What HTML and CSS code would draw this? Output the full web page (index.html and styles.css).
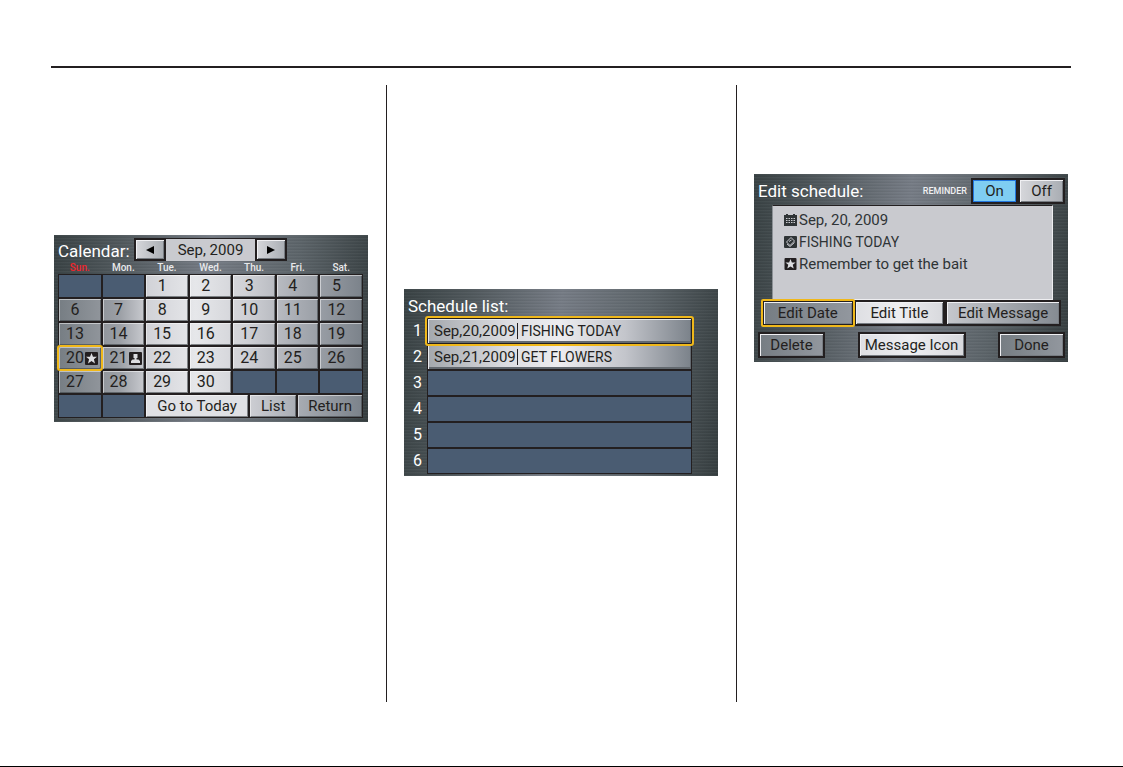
FILE: index.html
```
<!DOCTYPE html>
<html lang="en">
<head>
  <meta charset="UTF-8">
  <meta name="viewport" content="width=device-width, initial-scale=1.0">
  <title>Calendar</title>
  <link rel="stylesheet" href="styles.css">
</head>
<body>
  <!-- Shared icons -->
  <svg class="sprite" aria-hidden="true">
    <symbol id="icon-star" viewBox="0 0 13 13">
      <rect width="13" height="13" rx="1" fill="#231f20"/>
      <path d="M6.500 1 8 4.800h4L8.900 7.300 10 11.500 6.500 9.100 3 11.500l1.100-4.200L1 4.800h4z" fill="#dcdde0"/>
    </symbol>
    <symbol id="icon-person" viewBox="0 0 13 13">
      <rect width="13" height="13" rx="1" fill="#231f20"/>
      <path d="M4.500 2h4v4h-1v1.500h2L11 9v2H2V9l1.500-1.500h2V6h-1z" fill="#dcdde0"/>
    </symbol>
    <symbol id="icon-date" viewBox="0 0 13 12">
      <path d="M0 1h2V0h2v1h5V0h2v1h2v11H0z" fill="#2f3436"/>
      <path d="M2 4.500h9M2 6.500h9M2 8.500h9" stroke="#c9cacf" stroke-dasharray="1.500 1"/>
    </symbol>
    <symbol id="icon-title" viewBox="0 0 13 12">
      <rect width="13" height="12" rx="1" fill="#2f3436"/>
      <path d="M2.500 6 7 1.500 10.500 5 6 9.500zM3 8l3 2.500L10.500 6.500M5 5.500 7.500 4" fill="none" stroke="#c9cacf"/>
    </symbol>
  </svg>

  <hr class="page-rule">

  <main class="columns">
    <section class="column column-calendar">
      <div class="screen calendar">
        <header class="calendar-header">
          <h2>Calendar:</h2>
          <button class="key nav-key" aria-label="Previous month"><svg viewBox="0 0 10 8"><path d="M9 0v8L1 4z"/></svg></button>
          <div class="month">Sep, 2009</div>
          <button class="key nav-key" aria-label="Next month"><svg viewBox="0 0 10 8"><path d="M1 0v8l8-4z"/></svg></button>
        </header>
        <table class="month-table">
          <thead>
            <tr><th class="sunday">Sun.</th><th>Mon.</th><th>Tue.</th><th>Wed.</th><th>Thu.</th><th>Fri.</th><th>Sat.</th></tr>
          </thead>
          <tbody>
            <tr>
              <td class="empty"></td>
              <td class="empty"></td>
              <td><button class="day"><span>1</span></button></td>
              <td><button class="day"><span>2</span></button></td>
              <td><button class="day"><span>3</span></button></td>
              <td><button class="day"><span>4</span></button></td>
              <td><button class="day"><span>5</span></button></td>
            </tr>
            <tr>
              <td><button class="day"><span>6</span></button></td>
              <td><button class="day"><span>7</span></button></td>
              <td><button class="day"><span>8</span></button></td>
              <td><button class="day"><span>9</span></button></td>
              <td><button class="day"><span>10</span></button></td>
              <td><button class="day"><span>11</span></button></td>
              <td><button class="day"><span>12</span></button></td>
            </tr>
            <tr>
              <td><button class="day"><span>13</span></button></td>
              <td><button class="day"><span>14</span></button></td>
              <td><button class="day"><span>15</span></button></td>
              <td><button class="day"><span>16</span></button></td>
              <td><button class="day"><span>17</span></button></td>
              <td><button class="day"><span>18</span></button></td>
              <td><button class="day"><span>19</span></button></td>
            </tr>
            <tr>
              <td><button class="day selected"><span>20</span><svg><use href="#icon-star"/></svg></button></td>
              <td><button class="day"><span>21</span><svg><use href="#icon-person"/></svg></button></td>
              <td><button class="day"><span>22</span></button></td>
              <td><button class="day"><span>23</span></button></td>
              <td><button class="day"><span>24</span></button></td>
              <td><button class="day"><span>25</span></button></td>
              <td><button class="day"><span>26</span></button></td>
            </tr>
            <tr>
              <td><button class="day"><span>27</span></button></td>
              <td><button class="day"><span>28</span></button></td>
              <td><button class="day"><span>29</span></button></td>
              <td><button class="day"><span>30</span></button></td>
              <td class="empty"></td>
              <td class="empty"></td>
              <td class="empty"></td>
            </tr>
            <tr>
              <td class="empty"></td>
              <td class="empty"></td>
              <td colspan="5">
                <div class="calendar-actions">
                  <button class="today">Go to Today</button>
                  <button class="list">List</button>
                  <button class="return">Return</button>
                </div>
              </td>
            </tr>
          </tbody>
        </table>
      </div>
    </section>

    <section class="column column-list">
      <div class="screen schedule">
        <h2>Schedule list:</h2>
        <ol class="schedule-list">
          <li><span class="number">1</span><button class="entry selected"><span class="date">Sep,20,2009</span><span class="title">FISHING TODAY</span></button></li>
          <li><span class="number">2</span><button class="entry"><span class="date">Sep,21,2009</span><span class="title">GET FLOWERS</span></button></li>
          <li><span class="number">3</span><div class="entry empty"></div></li>
          <li><span class="number">4</span><div class="entry empty"></div></li>
          <li><span class="number">5</span><div class="entry empty"></div></li>
          <li><span class="number">6</span><div class="entry empty"></div></li>
        </ol>
      </div>
    </section>

    <section class="column column-edit">
      <div class="screen edit">
        <header class="edit-header">
          <h2>Edit schedule:</h2>
          <span class="reminder">REMINDER</span>
          <div class="toggle">
            <button class="key on">On</button>
            <button class="key">Off</button>
          </div>
        </header>
        <div class="details">
          <p><svg><use href="#icon-date"/></svg>Sep, 20, 2009</p>
          <p><svg><use href="#icon-title"/></svg><span class="title">FISHING TODAY</span></p>
          <p><svg><use href="#icon-star"/></svg>Remember to get the bait</p>
        </div>
        <div class="edit-actions">
          <button class="key dark selected">Edit Date</button>
          <button class="key light">Edit Title</button>
          <button class="key fade">Edit Message</button>
        </div>
        <div class="edit-footer">
          <button class="key dark">Delete</button>
          <button class="key light">Message Icon</button>
          <button class="key dark">Done</button>
        </div>
      </div>
    </section>
  </main>
</body>
</html>
```
FILE: styles.css
```
* {
  box-sizing: border-box;
  margin: 0;
  padding: 0;
}

body {
  display: flex;
  flex-direction: column;
  min-height: 100vh;
  padding: 66px 52px 64px 51px;
  border-bottom: 1px solid #000;
  background-color: #fff;
  color: #231f20;
  font-family: Roboto, "Liberation Sans", sans-serif;
  font-size: 15px;
}

.sprite {
  position: absolute;
  width: 0;
  height: 0;
}

.page-rule {
  height: 2px;
  border: none;
  background-color: #231f20;
  margin-bottom: 17px;
}

.columns {
  flex: 1;
  display: grid;
  grid-template-columns: 335fr 350fr 335fr;
}

.column + .column {
  border-left: 1px solid #231f20;
}

.column-calendar {
  padding: 150px 18px 0 3px;
}

.column-list {
  padding: 204px 18px 0 17px;
}

.column-edit {
  padding: 89px 3px 0 17px;
}

/* Brushed metal display */
.screen {
  background:
    repeating-linear-gradient(rgba(255, 255, 255, 0.03) 0 1px, transparent 1px 2px, rgba(0, 0, 0, 0.04) 2px 3px),
    linear-gradient(95deg, #394244 0%, #50585c 20%, #767c85 48%, #5c6469 75%, #363e40 100%);
}

h2 {
  color: #fff;
  font-size: 17px;
  font-weight: 400;
  line-height: 22px;
}

button {
  border: none;
  background: none;
  color: #231f20;
  font-family: inherit;
  font-size: 15px;
  line-height: 20px;
  white-space: nowrap;
  cursor: pointer;
}

.key {
  border: 2px solid #231f20;
  background: linear-gradient(90deg, #d6d7db, #a9adb3);
  box-shadow: inset 1px 1px #f0f0f3, inset -1px -1px #777c82;
}

.key.light {
  background: linear-gradient(90deg, #dedfe3, #ededf0, #d8d9dd);
}

.key.dark {
  background: linear-gradient(90deg, #767d83, #92979e);
}

.key.fade {
  background: linear-gradient(90deg, #c5c7cc, #858b92);
}

.selected {
  outline: 2px solid #f0b81a;
  border-radius: 1px;
}

.empty {
  background-color: #4a5c72;
}

/* Calendar */
.calendar {
  padding: 3px 5px 4px 4px;
}

.calendar-header {
  display: flex;
  height: 23px;
}

.calendar-header h2 {
  width: 76px;
  padding-top: 2px;
}

.nav-key {
  width: 32px;
}

.nav-key svg {
  display: block;
  width: 10px;
  height: 8px;
  margin: auto;
}

.month {
  width: 89px;
  border-top: 1px solid #231f20;
  background-color: #c9cacf;
  line-height: 22px;
  text-align: center;
}

.month-table {
  width: 100%;
  table-layout: fixed;
  border-collapse: separate;
  border-spacing: 0;
}

.month-table th {
  height: 13px;
  color: #e8e9eb;
  font-size: 10px;
  font-weight: 500;
  line-height: 13px;
}

.month-table .sunday {
  color: #f0252c;
}

.month-table tbody {
  background: linear-gradient(90deg, #767d83 0%, #9b9fa5 20%, #d2d3d8 30%, #e6e7ea 45%, #cfd0d5 62%, #a5a9b0 80%, #7b828a 100%);
}

.month-table td {
  height: 24px;
  border: 1px solid #231f20;
}

.day,
.calendar-actions button {
  display: flex;
  align-items: center;
  height: 22px;
  box-shadow: inset 1px 1px rgba(255, 255, 255, 0.5), inset -1px -1px rgba(60, 66, 70, 0.6);
}

.day {
  width: 100%;
  padding-left: 6px;
}

.day span {
  width: 20px;
  font-size: 16px;
  text-align: center;
}

.day svg {
  width: 13px;
  height: 13px;
}

.calendar-actions {
  display: flex;
}

.calendar-actions button {
  justify-content: center;
}

.calendar-actions .today {
  flex: 104;
  background-color: #e0e1e5;
}

.calendar-actions .list {
  flex: 47;
  border-left: 2px solid #231f20;
}

.calendar-actions .return {
  flex: 65;
  border-left: 2px solid #231f20;
}

/* Schedule list */
.schedule {
  padding: 6px 26px 2px 4px;
}

.schedule-list {
  list-style: none;
  margin-top: 1px;
}

.schedule-list li {
  display: flex;
  height: 26px;
}

.schedule-list .number {
  width: 19px;
  color: #fff;
  font-size: 16px;
  line-height: 26px;
  text-align: center;
}

.entry {
  flex: 1;
  display: flex;
  align-items: center;
  border: 1px solid #231f20;
  padding-left: 6px;
  background: linear-gradient(90deg, #a4a8ad 0%, #dcdde1 30%, #ededf0 50%, #c3c5cb 75%, #7b828a 100%);
  box-shadow: inset 1px 1px #e8e9eb, inset -1px -2px #63696f;
}

.entry.selected {
  z-index: 1;
}

.entry .date {
  width: 83px;
  text-align: left;
}

.title {
  font-size: 14px;
}

.entry .title {
  border-left: 1px solid #231f20;
  padding-left: 3px;
  line-height: 16px;
}

.entry.empty {
  background: #4a5c72;
  box-shadow: none;
}

/* Edit schedule */
.edit {
  padding: 4px 3px 4px 4px;
}

.edit-header {
  display: flex;
  align-items: center;
  height: 26px;
}

.reminder {
  margin-left: auto;
  margin-right: 4px;
  color: #f0f0f2;
  font-size: 9px;
  font-weight: 500;
}

.toggle {
  display: flex;
}

.toggle .key {
  width: 47px;
  height: 26px;
}

.toggle .on {
  background: #7fcdf2;
  box-shadow: inset 0 0 0 1px #2277e0;
}

.details {
  height: 95px;
  margin: 1px 12px 0 14px;
  border: 1px solid #eeeef1;
  border-top-color: #231f20;
  border-left-color: #8c9196;
  padding: 3px 11px;
  background-color: #c9cacf;
  color: #2f3436;
}

.details p {
  display: flex;
  align-items: center;
  gap: 2px;
  height: 22px;
}

.details svg {
  width: 13px;
  height: 12px;
}

.edit-actions {
  display: flex;
  margin: 0 4px 6px 4px;
}

.edit-actions .key {
  flex: 91;
  height: 26px;
}

.edit-actions .key:last-child {
  flex: 116;
}

.edit-actions .selected {
  z-index: 1;
  outline-offset: -1px;
}

.edit-footer {
  display: flex;
  justify-content: space-between;
}

.edit-footer .key {
  width: 67px;
  height: 26px;
}

.edit-footer .light {
  width: 108px;
}
```
